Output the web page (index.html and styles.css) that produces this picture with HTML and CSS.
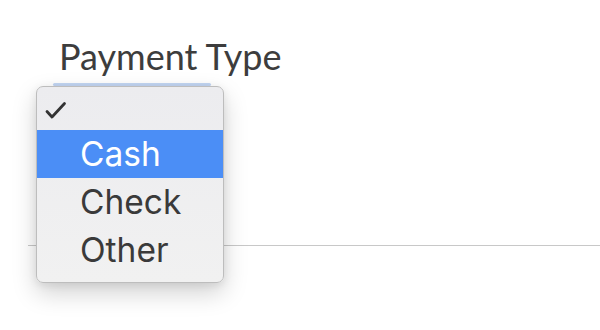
FILE: index.html
```html
<!DOCTYPE html>
<html>
<head>
<meta charset="utf-8">
<link rel="stylesheet" href="styles.css">
</head>
<body>
<div class="form">
  <div class="field">
    <div class="label">Payment Type</div>
    <div class="select">
      <div class="focus"></div>
      <div class="menu">
        <div class="opt first"><svg class="check" width="22" height="20" viewBox="0 0 22 20"><polyline points="2,10.5 7,16 19.5,2.5" fill="none" stroke="#333" stroke-width="2.8" stroke-linecap="round" stroke-linejoin="round"/></svg></div>
        <div class="opt active">Cash</div>
        <div class="opt">Check</div>
        <div class="opt">Other</div>
      </div>
    </div>
  </div>
</div>
</body>
</html>
```
FILE: styles.css
```css
html, body { margin: 0; padding: 0; background: #fff; }
body { width: 600px; height: 330px; overflow: hidden; }
.form { padding: 34px 0 0 28px; }
.field { display: flex; flex-direction: column; }
.label {
  font-family: Lato, "Open Sans", sans-serif;
  font-size: 36px;
  line-height: 44px;
  color: #3d3d3d;
  margin-left: 31px;
}
.select {
  position: relative;
  height: 167px;
  border-bottom: 1px solid #c8c8c8;
}
.focus {
  position: absolute;
  left: 25px;
  top: 5px;
  width: 158px;
  height: 3px;
  border-radius: 2px;
  background: #c3d6f3;
}
.menu {
  position: absolute;
  left: 8px;
  top: 8px;
  width: 186px;
  padding-bottom: 8px;
  background: linear-gradient(#ececef, #f1f1f1);
  border: 1px solid #bdbdbd;
  border-radius: 7px;
  box-shadow: 0 10px 24px rgba(0,0,0,0.18), 0 2px 8px rgba(0,0,0,0.08);
  font-family: Inter, "Liberation Sans", Arial, sans-serif;
  font-size: 33.5px;
  color: #3a3a3a;
  overflow: hidden;
}
.opt {
  height: 48px;
  line-height: 48px;
  padding-left: 43px;
}
.opt.first {
  height: 43px;
  padding-left: 8px;
  display: flex;
  align-items: center;
}
.check { display: block; margin-top: 4px; }
.opt.active { background: #4b8ef6; color: #fff; }
```
